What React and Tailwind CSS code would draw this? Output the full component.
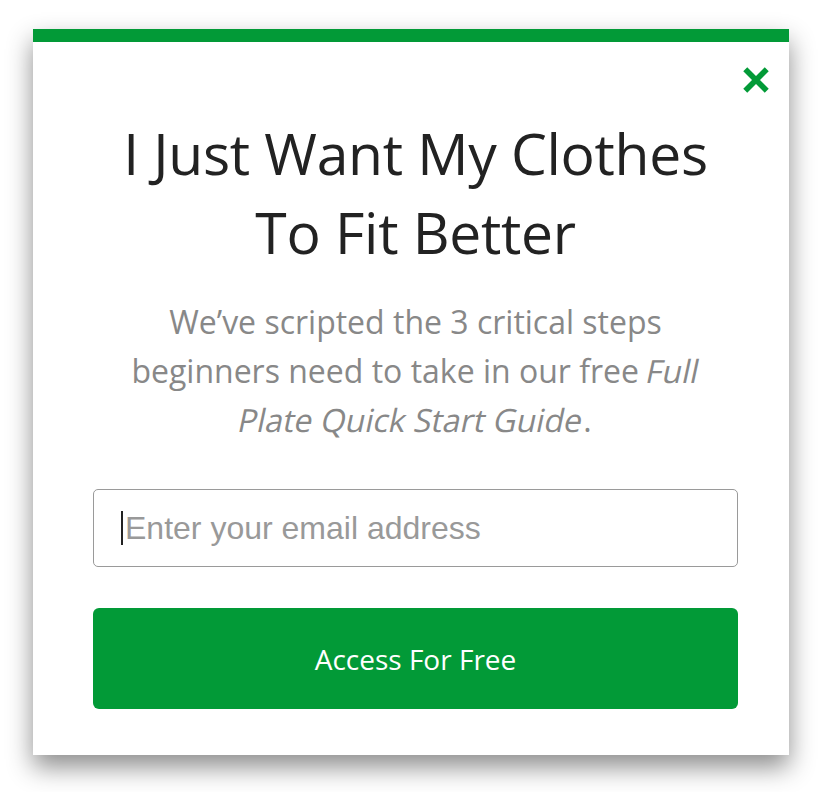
import React from 'react';

const CloseIcon = () => (
    <svg viewBox="0 0 24 24" className="w-[30px] h-[30px]" fill="none" stroke="#029a37" strokeWidth="4.5" strokeLinecap="square">
        <path d="M5 5 L19 19 M19 5 L5 19" />
    </svg>
);

export default function App() {
    return (
        <div className="min-h-[792px] w-[822px] bg-white pt-[29px] pl-[33px]" style={{ fontFamily: '"Open Sans", sans-serif' }}>
            <div className="w-[756px] h-[726px] bg-white shadow-[0_12px_24px_rgba(0,0,0,0.45)] flex flex-col">
                <div className="h-[13px] bg-[#029a37]" />
                <div className="flex justify-end pt-[23px] pr-[18px]">
                    <button type="button" className="p-0"><CloseIcon /></button>
                </div>
                <div className="pl-[60px] pr-[51px] flex flex-col">
                    <h1 className="mt-[19px] text-center text-[#222] text-[57px] leading-[79px] tracking-[-0.3px]">
                        I Just Want My Clothes<br />To Fit Better
                    </h1>
                    <p className="mt-[25px] mx-auto w-[590px] text-center text-[#888] text-[32px] leading-[49px]">
                        We’ve scripted the 3 critical steps beginners need to take in our free{' '}
                        <span className="inline-block -skew-x-12">Full</span>{' '}
                        <span className="inline-block -skew-x-12">Plate Quick Start Guide</span>.
                    </p>
                    {/* input with a visible text cursor */}
                    <div className="relative mt-[45px]">
                        <input
                            type="email"
                            placeholder="Enter your email address"
                            className="w-full h-[78px] border-[1.5px] border-[#9a9a9a] rounded-[5px] pl-[31px] pr-4 text-[32px] text-[#222] placeholder-[#999] outline-none"
                            style={{ fontFamily: '"Liberation Sans", Arial, sans-serif' }}
                        />
                        <span className="absolute left-[28px] top-[22px] w-[2px] h-[34px] bg-[#222]" />
                    </div>
                    <button type="button" className="mt-[41px] w-full h-[101px] bg-[#029a37] rounded-[6px] text-white text-[28px]">
                        Access For Free
                    </button>
                </div>
            </div>
        </div>
    );
}
